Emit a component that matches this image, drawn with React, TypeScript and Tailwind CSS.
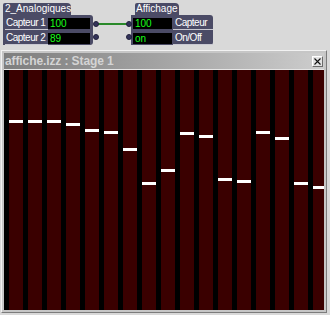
import React from 'react';

// bar tops inside the stage area, px from top
const levels = [50, 50, 50, 53, 59, 61, 78, 112, 99, 62, 65, 108, 110, 61, 67, 112, 116];

function Dot({ x, y }: { x: number; y: number }) {
  return (
    <div
      className="absolute w-[6px] h-[6px] rounded-full bg-[#33335a] border border-[#22223d]"
      style={{ left: x, top: y }}
    />
  );
}

function Value({ v, w }: { v: string; w: string }) {
  return (
    <div className={`${w} shrink-0 h-[11px] mb-px bg-black text-[#19ff19] text-[10px] leading-[11px] pl-[2px]`}>
      {v}
    </div>
  );
}

function Label({ t, cls }: { t: string; cls: string }) {
  return (
    <div className={`${cls} h-full whitespace-nowrap overflow-hidden border-b border-[#c9c9d2] text-white text-[10px] leading-[11px] tracking-[-0.5px] flex items-end pb-px`}>
      {t}
    </div>
  );
}

export default function App() {
  return (
    <div
      className="w-[330px] h-[315px] bg-[#d9d9d9] overflow-hidden"
      style={{ fontFamily: '"Liberation Sans", Arial, sans-serif' }}
    >
      {/* patch graph */}
      <div className="relative h-[50px]">
        {/* 2_Analogiques */}
        <div className="absolute left-[3px] top-[3px] flex flex-col">
          <div className="w-[68px] h-[12px] bg-[#4b4b66] rounded-tr-[4px] rounded-tl-[2px] text-white text-[10px] leading-[12px] pl-[2px] whitespace-nowrap">
            2_Analogiques
          </div>
          <div className="w-[90px] h-[30px] bg-[#4b4b66] rounded-tr-[3px] rounded-br-[3px] pt-px pl-[2px] flex flex-col gap-px">
            <div className="h-[14px] flex items-end">
              <Label t="Capteur 1" cls="w-[43px] shrink-0 pl-px" />
              <Value v="100" w="w-[42px]" />
            </div>
            <div className="h-[14px] flex items-end">
              <Label t="Capteur 2" cls="w-[43px] shrink-0 pl-px" />
              <Value v="89" w="w-[42px]" />
            </div>
          </div>
        </div>

        {/* Affichage */}
        <div className="absolute left-[131px] top-[3px] flex flex-col">
          <div className="ml-[4px] w-[44px] h-[12px] bg-[#4b4b66] rounded-tr-[4px] rounded-tl-[2px] text-white text-[10px] leading-[12px] pl-px whitespace-nowrap">
            Affichage
          </div>
          <div className="w-[82px] h-[30px] bg-[#4b4b66] rounded-tr-[3px] rounded-br-[3px] pt-px pl-[2px] flex flex-col gap-px">
            <div className="h-[14px] flex items-end">
              <Value v="100" w="w-[39px]" />
              <Label t="Capteur" cls="flex-1 pl-[2px] ml-px" />
            </div>
            <div className="h-[14px] flex items-end">
              <Value v="on" w="w-[39px]" />
              <Label t="On/Off" cls="flex-1 pl-[2px] ml-px" />
            </div>
          </div>
        </div>

        {/* link */}
        <div className="absolute left-[97px] top-[23px] w-[31px] h-[2px] bg-[#2a8a2a]" />
        <Dot x={93} y={21} />
        <Dot x={93} y={34} />
        <Dot x={126} y={21} />
        <Dot x={126} y={34} />
      </div>

      {/* stage window */}
      <div className="ml-[1px] w-[326px] h-[263px] border border-t-[#f2f2f2] border-l-[#f2f2f2] border-b-[#7c7c7c] border-r-[#7c7c7c] bg-[#c6c6c6] p-[2px] flex flex-col">
        <div className="h-[16px] flex items-center justify-between bg-gradient-to-r from-[#7e7e7e] to-[#cdcdcd] pl-[1px] pr-[1px]">
          <span className="text-[12px] font-bold text-[#d4d4d4] leading-[16px] tracking-[-0.1px]">affiche.izz : Stage 1</span>
          <div className="w-[11px] h-[11px] bg-[#e2e2e2] border border-t-white border-l-white border-b-[#6a6a6a] border-r-[#6a6a6a] flex items-center justify-center">
            <svg width="7" height="7" viewBox="0 0 7 7">
              <path d="M0.5 0.5 L6.5 6.5 M6.5 0.5 L0.5 6.5" stroke="#111" strokeWidth="1.1" />
            </svg>
          </div>
        </div>
        <div className="h-px bg-[#e6e6e6]" />
        <div className="h-[240px] bg-black flex gap-[5px] pl-[5px] overflow-hidden">
          {levels.map((t, i) => (
            <div key={i} className="relative w-[14px] shrink-0 h-full bg-[#3a0000]">
              <div className="absolute left-0 w-full h-[3px] bg-white" style={{ top: t }} />
            </div>
          ))}
        </div>
      </div>
    </div>
  );
}
